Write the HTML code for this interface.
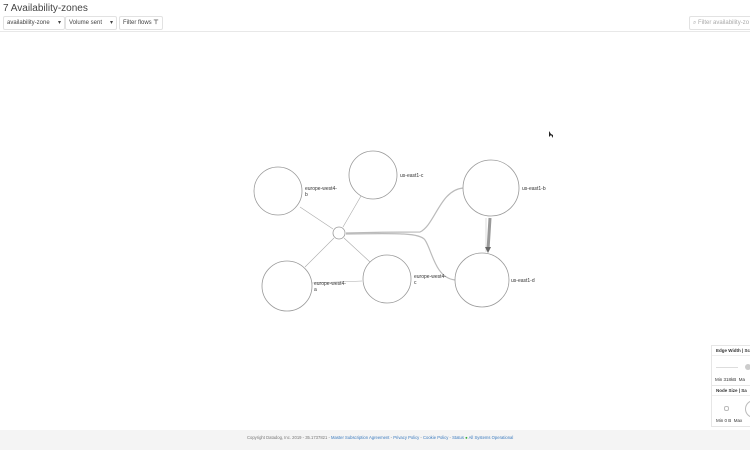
<!DOCTYPE html>
<html><head><style>
body{margin:0;width:750px;height:450px;overflow:hidden;background:#fff;font-family:"Liberation Sans",sans-serif;position:relative}
.t{position:absolute;left:3px;top:3px;font-size:10px;color:#444}
.b{position:absolute;top:16px;height:12px;border:1px solid #e2e2e2;border-radius:2px;font-size:6px;color:#444;line-height:12px;padding:0 3px;box-sizing:content-box}
.hr{position:absolute;left:0;right:0;top:31px;border-top:1px solid #e8e8e8}
.f{position:absolute;left:0;right:0;top:430px;height:20px;background:#f4f4f4;font-size:4.2px;color:#777;line-height:16px}
.f div{position:absolute;left:247px;top:0;white-space:nowrap}
.f a{color:#3b7bbf}
.p{position:absolute;left:711px;width:45px;border:1px solid #e6e6e6;background:#fff;font-size:4.5px;color:#333}
</style></head><body>
<div class="t">7 Availability-zones</div>
<div class="b" style="left:3px;width:54px">availability-zone <span style="float:right">▾</span></div>
<div class="b" style="left:65px;width:44px">Volume sent <span style="float:right">▾</span></div>
<div class="b" style="left:119px;width:36px">Filter flows <b>⊤</b></div>
<div class="b" style="left:689px;width:70px;color:#aaa">⌕ Filter availability-zo</div>
<div class="hr"></div>
<svg width="750" height="450" style="position:absolute;left:0;top:0" font-family="Liberation Sans" font-size="5" fill="#333">
<g stroke="#aaa" stroke-width="0.6" fill="none">
<line x1="300" y1="207" x2="333" y2="229"/><line x1="361" y1="196" x2="343" y2="227"/>
<line x1="305" y1="267" x2="334" y2="238"/><line x1="370" y1="262" x2="344" y2="238"/>
<line x1="312" y1="283" x2="362" y2="281"/>
<path d="M346 233 C380 232 410 232 420 232 C435 225 440 190 463 188" stroke="#bbb" stroke-width="1.2"/>
<path d="M346 234 C400 233 420 233 425 240 C432 250 435 278 455 280" stroke="#bbb" stroke-width="1.2"/>
<line x1="490" y1="218" x2="488" y2="250" stroke="#999" stroke-width="3"/>
<line x1="486" y1="218" x2="486" y2="252" stroke="#bbb" stroke-width="0.5"/>
</g>
<polygon points="485,247 491,247 488,253" fill="#666"/>
<g stroke="#999" stroke-width="0.8" fill="#fff">
<circle cx="278" cy="191" r="24"/><circle cx="373" cy="175" r="24"/><circle cx="339" cy="233" r="6"/>
<circle cx="287" cy="286" r="25"/><circle cx="387" cy="279" r="24"/><circle cx="491" cy="188" r="28"/><circle cx="482" cy="280" r="27"/>
</g>
<text x="305" y="190">europe-west4-</text><text x="305" y="196">b</text>
<text x="400" y="177">us-east1-c</text>
<text x="522" y="190">us-east1-b</text>
<text x="511" y="282">us-east1-d</text>
<text x="314" y="285">europe-west4-</text><text x="314" y="291">a</text>
<text x="414" y="278">europe-west4-</text><text x="414" y="284">c</text>
<polygon points="549,131 549,137 551,135 553,138 553,135 551,134" fill="#222"/>
</svg>
<div class="p" style="top:345px;height:40px">
<div style="padding:2px 4px;border-bottom:1px solid #eee;font-weight:bold">Edge Width | Sc</div>
<div style="margin:11px 4px 0;width:22px;border-top:1px solid #ddd"></div>
<div style="position:absolute;left:33px;top:18px;width:6px;height:6px;border-radius:3px;background:#ccc"></div>
<div style="position:absolute;left:3px;top:31px">Min 318kB &nbsp;Ma</div>
</div>
<div class="p" style="top:385px;height:40px">
<div style="padding:2px 4px;border-bottom:1px solid #eee;font-weight:bold">Node Size | Sa</div>
<div style="position:absolute;left:12px;top:20px;width:3px;height:3px;border-radius:2px;border:1px solid #bbb"></div>
<div style="position:absolute;left:33px;top:14px;width:16px;height:16px;border-radius:9px;border:1px solid #bbb"></div>
<div style="position:absolute;left:4px;top:32px">Min 0 B &nbsp;Max</div>
</div>
<div class="f"><div>Copyright Datadog, Inc. 2019 - 35.1737821 - <a>Master Subscription Agreement</a> - <a>Privacy Policy</a> - <a>Cookie Policy</a> - <a>Status</a> <span style="color:#3a3">●</span> <a>All Systems Operational</a></div></div>
</body></html>
